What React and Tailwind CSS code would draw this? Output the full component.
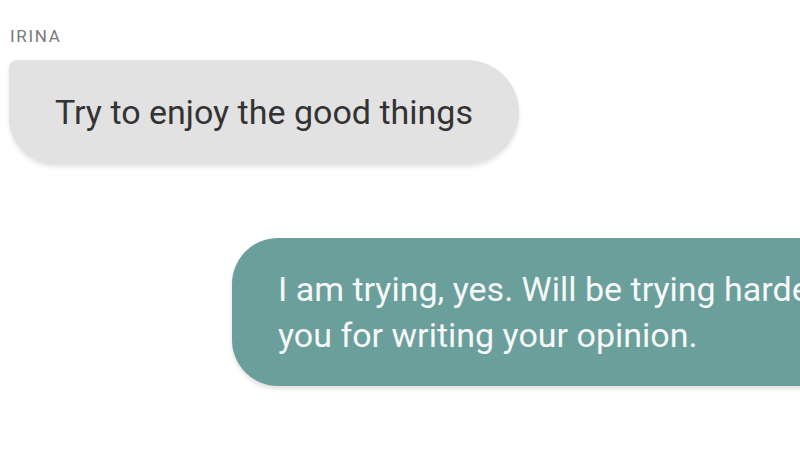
// Chat thread: one received bubble, one sent bubble running off the right edge.

function ReceivedBubble({ author, text }) {
  return (
    <div className="flex flex-col items-start">
      <div className="ml-[10px] text-[17px] leading-[20px] tracking-[0.1em] text-[#7a7a7a]">{author}</div>
      <div className="mt-[14px] ml-[9px] bg-[#e2e2e2] text-[#333333] rounded-tl-[8px] rounded-tr-[52px] rounded-br-[52px] rounded-bl-[46px] px-[46px] py-[29px] text-[34px] leading-[46px] shadow-[0_3px_4px_rgba(0,0,0,0.10)]">
        {text}
      </div>
    </div>
  );
}

function SentBubble({ lines }) {
  return (
    <div className="ml-[232px] w-[800px] shrink-0 bg-[#6a9f9b] text-[#f7f9f9] rounded-l-[46px] rounded-r-[8px] px-[46px] py-[28px] text-[34px] leading-[46px] whitespace-nowrap shadow-[0_3px_4px_rgba(0,0,0,0.12)]">
      {lines.map((l) => (
        <div key={l}>{l}</div>
      ))}
    </div>
  );
}

export default function App() {
  return (
    <div className="w-[800px] h-[450px] overflow-hidden bg-white pt-[26px]" style={{ fontFamily: 'Roboto, "Noto Sans", sans-serif' }}>
      <ReceivedBubble author="IRINA" text="Try to enjoy the good things" />
      <div className="mt-[74px] flex">
        <SentBubble lines={['I am trying, yes. Will be trying harder. Thank', 'you for writing your opinion.']} />
      </div>
    </div>
  );
}
